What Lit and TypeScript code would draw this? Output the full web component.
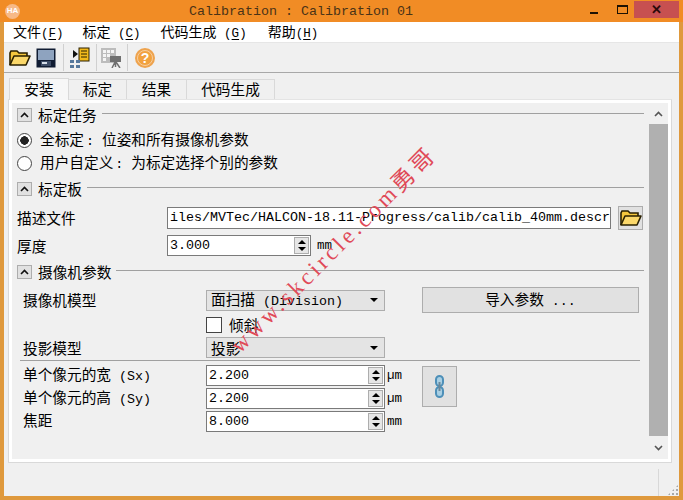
import { LitElement, css, html } from "lit";
import { customElement } from "lit/decorators.js";

const folderIcon = html`<svg width="22" height="16" viewBox="0 0 22 16">
  <path d="M1 15V3l1-2h6l2 2h8v3" fill="#f5c73d" stroke="#2a2000" stroke-width="1.6" />
  <path d="M1 15 5 6h16l-4 9z" fill="#fbd86a" stroke="#2a2000" stroke-width="1.6" stroke-linejoin="round" />
</svg>`;

const saveIcon = html`<svg width="20" height="20" viewBox="0 0 20 20">
  <rect x="0.5" y="0.5" width="19" height="19" fill="#101c33" />
  <rect x="2" y="2" width="16" height="10" fill="#8ea3bf" />
  <rect x="5" y="13" width="10" height="5" fill="#3d4c66" />
  <rect x="6" y="14" width="5" height="2" fill="#d5dde8" />
</svg>`;

const importIcon = html`<svg width="20" height="21" viewBox="0 0 20 21">
  <rect x="9" y="1" width="10" height="13" fill="#f2b91c" stroke="#2a2000" />
  <path d="M11 4h6M11 7h6M11 10h6" stroke="#2a2000" />
  <path d="M3 3l5 4-5 4z" fill="#111" />
  <path d="M0 13h4v3H0zM6 13h4v3H6zM0 18h4v3H0zM6 18h4v3H6z" fill="#56789c" />
</svg>`;

const cameraIcon = html`<svg width="21" height="20" viewBox="0 0 21 20">
  <rect width="15" height="15" fill="#bcbcbc" />
  <path d="M2 2h3v3H2zM6 2h3v3H6zM10 2h3v3h-3zM2 6h3v3H2zM6 6h3v3H6zM2 10h3v3H2z" fill="#f4f4f4" />
  <rect x="9" y="8" width="11" height="6" fill="#6f6f6f" />
  <path d="M14 14l-3 6M15 14l4 6M14.500 14v5" stroke="#6f6f6f" stroke-width="1.500" fill="none" />
</svg>`;

const chainIcon = html`<svg width="9" height="23" viewBox="0 0 9 23">
  <rect x="1" y="1" width="7" height="10" rx="3.500" fill="#a9cfe3" stroke="#4d8fb8" stroke-width="2" />
  <rect x="1" y="12" width="7" height="10" rx="3.500" fill="#a9cfe3" stroke="#4d8fb8" stroke-width="2" />
  <path d="M4.500 7v9" stroke="#6d8797" stroke-width="2" />
</svg>`;

const chevron = html`<svg width="9" height="6" viewBox="0 0 9 6">
  <path d="M1 5l3.500-3.500L8 5" fill="none" stroke="#111" stroke-width="1.600" />
</svg>`;

@customElement("app-root")
export class AppRoot extends LitElement {
  public static styles = css`
    :host {
      display: block;
    }

    .window {
      display: flex;
      flex-direction: column;
      width: 683px;
      height: 500px;
      background: #df993d;
      color: #000;
      font-family: "Noto Sans CJK SC", "Liberation Mono", monospace;
      font-size: 14.670px;
      line-height: 16px;
      overflow: hidden;
      position: relative;
    }

    .l {
      font-family: "Liberation Mono", monospace;
      font-size: 13.330px;
      white-space: pre;
    }

    .colon {
      padding-left: 2px;
    }

    .titlebar {
      display: flex;
      align-items: center;
      height: 22px;
      flex: none;
      background: #f18c25;
      color: #4a3317;
      font-family: "Liberation Mono", monospace;
      font-size: 13.330px;
    }

    .logo {
      display: flex;
      align-items: center;
      justify-content: center;
      width: 15px;
      height: 15px;
      margin-left: 5px;
      border-radius: 50%;
      background: #f7b987;
      color: #fff;
      font-family: "Liberation Sans", sans-serif;
      font-size: 8px;
      font-weight: bold;
    }

    .title {
      margin-left: 169px;
      padding-top: 2px;
      flex: 1;
    }

    .wincontrols {
      display: flex;
      align-items: flex-start;
      align-self: flex-start;
      margin-right: 4px;
    }

    .wbtn {
      display: flex;
      align-items: center;
      justify-content: center;
      width: 20px;
      height: 18px;
    }

    .wbtn.min {
      margin-right: 8px;
    }

    .wbtn.min i {
      display: block;
      width: 8px;
      height: 2px;
      margin-top: 8px;
      background: #1d1204;
    }

    .wbtn.max i {
      display: block;
      width: 9px;
      height: 6px;
      border: 1px solid #1d1204;
      border-top-width: 2px;
    }

    .wbtn.close {
      width: 45px;
      height: 17px;
      margin: 1px 0 0 2px;
      background: #c75050;
      color: #2a0a0a;
      font-family: "Liberation Sans", sans-serif;
      font-size: 13px;
      font-weight: bold;
    }

    .client {
      display: flex;
      flex-direction: column;
      flex: 1;
      margin: 0 4px 4px;
      background: #f0f0f0;
      min-height: 0;
    }

    .menubar {
      display: flex;
      height: 20px;
      flex: none;
      align-items: center;
      background: #fff;
      border-bottom: 1px solid #e6e6e6;
      font-size: 14px;
    }

    .menubar .l {
      font-size: 12.500px;
    }

    .menubar u {
      text-underline-offset: 2px;
    }

    .toolbar {
      display: flex;
      align-items: center;
      height: 29px;
      flex: none;
      border-bottom: 1px solid #a8a8a8;
    }

    .tool {
      display: flex;
    }

    .sep {
      width: 1px;
      height: 27px;
      background: #d0d0d0;
    }

    .tabs {
      display: flex;
      align-items: flex-end;
      height: 26px;
      flex: none;
      margin-left: 5px;
      position: relative;
      z-index: 1;
    }

    .tab {
      display: flex;
      align-items: center;
      justify-content: center;
      height: 20px;
      box-sizing: border-box;
      padding-bottom: 1px;
      background: #f0f0f0;
      border: 1px solid #d9d9d9;
      border-bottom: none;
      border-left: none;
    }

    .tab.active {
      height: 22px;
      margin-bottom: -1px;
      background: #f7f7f7;
      border-left: 1px solid #d9d9d9;
    }

    .panel {
      display: flex;
      box-sizing: border-box;
      height: 364px;
      margin: 0 7px 0 4px;
      padding: 3px;
      flex: none;
      background: #fff;
      border: 1px solid #d9d9d9;
      border-top-color: #e4e4e4;
    }

    .scrollarea {
      flex: 1;
      box-sizing: border-box;
      padding: 5px 5px 0 5px;
      background: #f0f0f0;
      min-width: 0;
    }

    .scrollbar {
      display: flex;
      flex-direction: column;
      width: 19px;
      flex: none;
      background: #f0f0f0;
    }

    .sb-arrow {
      display: flex;
      align-items: center;
      justify-content: center;
      height: 21px;
      flex: none;
    }

    .sb-arrow.down {
      height: 23px;
    }

    .sb-arrow svg path {
      stroke: #555;
    }

    .sb-arrow.down svg {
      transform: scaleY(-1);
    }

    .thumb {
      flex: 1;
      background: #b0b0b0;
    }

    .section {
      display: flex;
      align-items: center;
      height: 14px;
    }

    .collapse {
      display: flex;
      align-items: center;
      justify-content: center;
      box-sizing: border-box;
      width: 15px;
      height: 14px;
      margin-right: 6px;
      background: #e1e1e1;
      border: 1px solid #adadad;
      flex: none;
    }

    .section .rule {
      flex: 1;
      height: 1px;
      margin: 0 0 4px 5px;
      background: #a0a0a0;
    }

    .radio {
      display: flex;
      align-items: center;
      height: 23px;
    }

    .radio i {
      display: block;
      box-sizing: border-box;
      width: 15px;
      height: 15px;
      margin-right: 8px;
      border: 1px solid #444;
      border-radius: 50%;
      background: #fff;
    }

    .radio i.on {
      background: radial-gradient(circle, #222 0 4px, #fff 4.500px);
    }

    .row {
      display: flex;
      align-items: center;
    }

    .label {
      flex: none;
    }

    .input {
      display: flex;
      align-items: center;
      box-sizing: border-box;
      height: 21px;
      padding-left: 2px;
      background: #fff;
      border: 1px solid #7a7a7a;
      font-family: "Liberation Mono", monospace;
      font-size: 13.330px;
      overflow: hidden;
      white-space: nowrap;
    }

    .spinbox {
      justify-content: space-between;
    }

    .spin {
      display: flex;
      flex-direction: column;
      box-sizing: border-box;
      width: 15px;
      height: 17px;
      margin-right: 1px;
      background: #e6e6e6;
      border: 1px solid #adadad;
      flex: none;
    }

    .spin b {
      flex: 1;
      display: flex;
      align-items: center;
      justify-content: center;
    }

    .spin b::before {
      content: "";
      border-left: 4px solid transparent;
      border-right: 4px solid transparent;
    }

    .spin b.up::before {
      border-bottom: 4px solid #000;
    }

    .spin b.dn::before {
      border-top: 4px solid #000;
    }

    .unit {
      margin-left: 2px;
      font-family: "Liberation Mono", monospace;
      font-size: 12.500px;
      flex: none;
    }

    .browse {
      display: flex;
      align-items: center;
      justify-content: center;
      box-sizing: border-box;
      width: 25px;
      height: 24px;
      margin-left: 7px;
      background: #e1e1e1;
      border: 1px solid #adadad;
    }

    .combo {
      display: flex;
      align-items: center;
      justify-content: space-between;
      box-sizing: border-box;
      width: 179px;
      height: 21px;
      padding: 0 4px;
      background: #e4e4e4;
      border: 1px solid #adadad;
      flex: none;
    }

    .combo::after {
      content: "";
      border-left: 4px solid transparent;
      border-right: 4px solid transparent;
      border-top: 4px solid #000;
      margin-right: 2px;
    }

    .button {
      display: flex;
      align-items: center;
      justify-content: center;
      box-sizing: border-box;
      background: #e1e1e1;
      border: 1px solid #adadad;
      flex: none;
    }

    .import {
      width: 217px;
      height: 26px;
      margin-left: 37px;
    }

    .check {
      display: block;
      box-sizing: border-box;
      width: 16px;
      height: 16px;
      margin-right: 7px;
      background: #fff;
      border: 1px solid #444;
      flex: none;
    }

    .divider {
      height: 1px;
      margin: 2px 4px 4px 3px;
      background: #a0a0a0;
    }

    .params {
      display: grid;
      grid-template-columns: 183px 179px auto;
      align-items: center;
      padding-left: 6px;
    }

    .measure {
      display: grid;
      grid-template-columns: 399px 35px;
      padding-left: 6px;
    }

    .measure-rows {
      display: flex;
      flex-direction: column;
      gap: 2px;
    }

    .measure-rows .label {
      width: 183px;
    }

    .chain {
      height: 41px;
      margin-top: 1px;
    }

    .statusbar {
      display: flex;
      flex: 1;
      justify-content: flex-end;
      align-items: flex-end;
    }

    .status-sep {
      width: 1px;
      height: 27px;
      margin-right: 8px;
      background: #d8d8d8;
    }

    .grip {
      width: 12px;
      height: 12px;
      background-image: radial-gradient(circle, #a8a8a8 1px, transparent 1.200px);
      background-size: 4px 4px;
      clip-path: polygon(100% 0, 100% 100%, 0 100%);
    }

    .watermark {
      position: absolute;
      left: 184px;
      top: 236px;
      width: 300px;
      text-align: center;
      color: #e04a58;
      font-family: "Liberation Serif", "Noto Sans CJK SC", serif;
      font-size: 23px;
      line-height: 28px;
      letter-spacing: 3.500px;
      transform: rotate(-45deg);
      white-space: nowrap;
      pointer-events: none;
    }
  `;

  private spinInput(value: string, width: number) {
    return html`<div class="input spinbox" style="width:${width}px">
      <span>${value}</span>
      <div class="spin"><b class="up"></b><b class="dn"></b></div>
    </div>`;
  }

  private section(title: string, top: number) {
    return html`<div class="section" style="margin-top:${top}px">
      <span class="collapse">${chevron}</span>
      <span class="label">${title}</span>
      <span class="rule"></span>
    </div>`;
  }

  public render() {
    return html`
      <div class="window">
        <div class="titlebar">
          <span class="logo">HA</span>
          <span class="title">Calibration : Calibration 01</span>
          <div class="wincontrols">
            <span class="wbtn min"><i></i></span>
            <span class="wbtn max"><i></i></span>
            <span class="wbtn close">✕</span>
          </div>
        </div>
        <div class="client">
          <div class="menubar">
            <span style="margin-left:9px">文件<span class="l">(<u>F</u>)</span></span>
            <span style="margin-left:19px">标定<span class="l"> (<u>C</u>)</span></span>
            <span style="margin-left:20px">代码生成<span class="l"> (<u>G</u>)</span></span>
            <span style="margin-left:21px">帮助<span class="l">(<u>H</u>)</span></span>
          </div>
          <div class="toolbar">
            <span class="tool" style="margin-left:5px">${folderIcon}</span>
            <span class="tool" style="margin-left:5px">${saveIcon}</span>
            <span class="sep" style="margin-left:7px"></span>
            <span class="tool" style="margin-left:6px">${importIcon}</span>
            <span class="sep" style="margin-left:6px"></span>
            <span class="tool" style="margin-left:4px">${cameraIcon}</span>
            <span class="sep" style="margin-left:5px"></span>
            <svg width="20" height="20" viewBox="0 0 20 20" style="margin-left:7px">
              <circle cx="10" cy="10" r="10" fill="#eea34e" />
              <circle cx="10" cy="10" r="7.500" fill="#f2a23f" stroke="#f7cfa0" />
              <text x="10" y="15" text-anchor="middle" fill="#fff" font-family="Liberation Sans" font-weight="bold" font-size="14">?</text>
            </svg>
          </div>
          <div class="tabs">
            <span class="tab active" style="width:60px">安装</span>
            <span class="tab" style="width:58px">标定</span>
            <span class="tab" style="width:60px">结果</span>
            <span class="tab" style="width:88px">代码生成</span>
          </div>
          <div class="panel">
            <div class="scrollarea">
              ${this.section("标定任务", 0)}
              <div class="radio" style="margin-top:7px">
                <i class="on"></i>
                <span>全标定<span class="l colon">: </span>位姿和所有摄像机参数</span>
              </div>
              <div class="radio">
                <i></i>
                <span>用户自定义<span class="l colon">: </span>为标定选择个别的参数</span>
              </div>
              ${this.section("标定板", 7)}
              <div class="row" style="margin-top:10px">
                <span class="label" style="width:150px">描述文件</span>
                <div class="input" style="width:444px;height:22px">iles/MVTec/HALCON-18.11-Progress/calib/calib_40mm.descr</div>
                <span class="browse">${folderIcon}</span>
              </div>
              <div class="row" style="margin-top:5px">
                <span class="label" style="width:150px">厚度</span>
                ${this.spinInput("3.000", 144)}
                <span class="unit" style="margin-left:6px">mm</span>
              </div>
              ${this.section("摄像机参数", 9)}
              <div class="params" style="margin-top:8px">
                <span>摄像机模型</span>
                <span class="combo"><span>面扫描<span class="l"> (Division)</span></span></span>
                <span class="button import"><span>导入参数<span class="l"> ...</span></span></span>
              </div>
              <div class="row" style="margin:3px 0 0 189px;height:18px">
                <i class="check"></i>倾斜
              </div>
              <div class="params" style="margin-top:3px">
                <span>投影模型</span>
                <span class="combo"><span>投影</span></span>
              </div>
              <div class="divider"></div>
              <div class="measure">
                <div class="measure-rows">
                  ${[
                    ["单个像元的宽", " (Sx)", "2.200", "µm"],
                    ["单个像元的高", " (Sy)", "2.200", "µm"],
                    ["焦距", "", "8.000", "mm"],
                  ].map(
                    ([name, sym, value, unit]) => html`<div class="row">
                      <span class="label">${name}<span class="l">${sym}</span></span>
                      ${this.spinInput(value, 179)}
                      <span class="unit">${unit}</span>
                    </div>`,
                  )}
                </div>
                <span class="button chain">${chainIcon}</span>
              </div>
            </div>
            <div class="scrollbar">
              <div class="sb-arrow">${chevron}</div>
              <div class="thumb"></div>
              <div class="sb-arrow down">${chevron}</div>
            </div>
          </div>
          <div class="statusbar">
            <span class="status-sep"></span>
            <span class="grip"></span>
          </div>
        </div>
        <div class="watermark">www.skcircle.com勇哥</div>
      </div>
    `;
  }
}
